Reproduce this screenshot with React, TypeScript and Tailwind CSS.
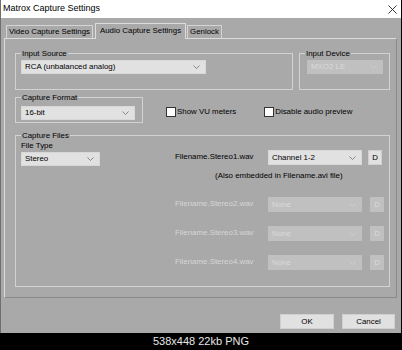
import React from 'react';

const Chevron: React.FC<{ muted?: boolean }> = ({ muted }) => (
  <svg width="7" height="4" viewBox="0 0 7 4" className="shrink-0">
    <path d="M0.5 0.5 L3.5 3.5 L6.5 0.5" fill="none" stroke={muted ? '#d2d2d2' : '#707070'} strokeWidth="0.8" />
  </svg>
);

interface ComboProps {
  value: string;
  className: string;
  disabled?: boolean;
}

const Combo: React.FC<ComboProps> = ({ value, className, disabled }) => (
  <div
    className={`flex items-center justify-between pl-[3px] pr-[5px] border ${
      disabled ? 'bg-[#c0c0c0] border-[#c0c0c0] text-[#dadada]' : 'bg-[#e1e1e1] border-[#d8d8d8] text-black'
    } ${className}`}
  >
    <span className="leading-none">{value}</span>
    <Chevron muted={disabled} />
  </div>
);

const DButton: React.FC<{ disabled?: boolean }> = ({ disabled }) => (
  <div
    className={`flex h-[15px] w-[14px] items-center justify-center border leading-none ${
      disabled ? 'bg-[#c0c0c0] border-[#c0c0c0] text-[#dadada]' : 'bg-[#e1e1e1] border-[#d0d0d0] text-black'
    }`}
  >
    D
  </div>
);

const Checkbox: React.FC<{ label: string }> = ({ label }) => (
  <div className="flex items-center gap-[1px]">
    <div className="h-[10px] w-[10px] border border-[#333333] bg-white" />
    <span className="leading-none">{label}</span>
  </div>
);

const FileRow: React.FC<{ name: string; value: string; disabled?: boolean; className?: string }> = ({
  name,
  value,
  disabled,
  className = '',
}) => (
  <div className={`flex items-start ${className}`}>
    <span className={`w-[93px] pt-[1px] leading-[11px] ${disabled ? 'text-[#d6d6d6]' : 'text-black'}`}>{name}</span>
    <Combo value={value} disabled={disabled} className="h-[15px] w-[94px]" />
    <div className={disabled ? 'ml-[8px]' : 'ml-[6px]'}>
      <DButton disabled={disabled} />
    </div>
  </div>
);

export default function App() {
  return (
    <div
      className="flex h-[350px] w-[402px] flex-col whitespace-nowrap bg-black text-[7.9px] text-black"
      style={{ fontFamily: '"Liberation Sans", Arial, sans-serif' }}
    >
      {/* Dialog */}
      <div className="flex h-[333px] flex-col border-x border-[#6e6e6e] border-r-black bg-[#a9a9a9]">
        {/* Title bar */}
        <div className="flex h-[18px] shrink-0 items-center justify-between bg-white pl-[2px] pr-[4px]">
          <span className="text-[9px]">Matrox Capture Settings</span>
          <svg width="9" height="9" viewBox="0 0 9 9">
            <path d="M0.5 0.5 L8.5 8.5 M8.5 0.5 L0.5 8.5" stroke="#222" strokeWidth="0.9" />
          </svg>
        </div>

        {/* Tabs */}
        <div className="mt-[5px] flex h-[15px] items-end pl-[5px]">
          <div className="flex h-[13px] w-[87px] items-center justify-center border border-b-0 border-[#d4d4d4]">
            Video Capture Settings
          </div>
          <div className="relative z-10 -mb-px ml-[2px] flex h-[16px] w-[91px] items-center justify-center border border-b-0 border-[#dcdcdc] bg-[#a9a9a9] pb-[1px]">
            Audio Capture Settings
          </div>
          <div className="ml-[1px] flex h-[13px] w-[35px] items-center justify-center border border-b-0 border-[#d4d4d4]">
            Genlock
          </div>
        </div>

        {/* Tab panel */}
        <div className="ml-[3px] flex h-[260px] w-[393px] flex-col border border-[#dcdcdc] border-b-[#8a8a8a] border-r-[#8a8a8a] pl-[10px] pt-[9px]">
          {/* Row 1 */}
          <div className="flex">
            <fieldset className="h-[42px] w-[278px] border border-[#d2d2d2] pl-[5px]">
              <legend className="px-[1px] leading-[11px]">Input Source</legend>
              <Combo value="RCA (unbalanced analog)" className="mt-[1px] h-[14px] w-[185px]" />
            </fieldset>
            <fieldset className="ml-[6px] h-[42px] w-[91px] border border-[#d2d2d2] pl-[5px]">
              <legend className="px-[1px] leading-[11px]">Input Device</legend>
              <Combo value="MXO2 LE" disabled className="ml-[2px] mt-[1px] h-[14px] w-[76px]" />
            </fieldset>
          </div>

          {/* Row 2 */}
          <div className="mt-[2px] flex items-start">
            <fieldset className="h-[31px] w-[128px] border border-[#d2d2d2] pl-[5px]">
              <legend className="px-[1px] leading-[11px]">Capture Format</legend>
              <Combo value="16-bit" className="mt-[3px] h-[14px] w-[114px]" />
            </fieldset>
            <div className="ml-[23px] mt-[15px] flex items-center">
              <Checkbox label="Show VU meters" />
              <div className="ml-[28px]">
                <Checkbox label="Disable audio preview" />
              </div>
            </div>
          </div>

          {/* Row 3 */}
          <fieldset className="mt-[7px] h-[157px] w-[375px] border border-[#d2d2d2] pl-[5px]">
            <legend className="px-[1px] leading-[11px]">Capture Files</legend>
            <div className="flex">
              <div className="flex w-[154px] flex-col">
                <span className="leading-[10px]">File Type</span>
                <Combo value="Stereo" className="mt-[1px] h-[14px] w-[79px]" />
              </div>
              <div className="flex flex-col">
                <FileRow name="Filename.Stereo1.wav" value="Channel 1-2" className="mt-[9px]" />
                <span className="mt-[6px] pl-[40px] leading-[10px]">(Also embedded in Filename.avi file)</span>
                <FileRow name="Filename.Stereo2.wav" value="None" disabled className="mt-[16px]" />
                <FileRow name="Filename.Stereo3.wav" value="None" disabled className="mt-[14px]" />
                <FileRow name="Filename.Stereo4.wav" value="None" disabled className="mt-[14px]" />
              </div>
            </div>
          </fieldset>
        </div>

        {/* Buttons */}
        <div className="mt-[16px] flex justify-end gap-[8px] pr-[6px]">
          <div className="flex h-[15px] w-[54px] items-center justify-center border border-[#d0d0d0] bg-[#e1e1e1]">OK</div>
          <div className="flex h-[15px] w-[53px] items-center justify-center border border-[#d0d0d0] bg-[#e1e1e1]">Cancel</div>
        </div>
      </div>

      {/* Image caption strip */}
      <div className="flex flex-1 items-center justify-center text-[11px] text-[#e6e6e6]">538x448 22kb PNG</div>
    </div>
  );
}
